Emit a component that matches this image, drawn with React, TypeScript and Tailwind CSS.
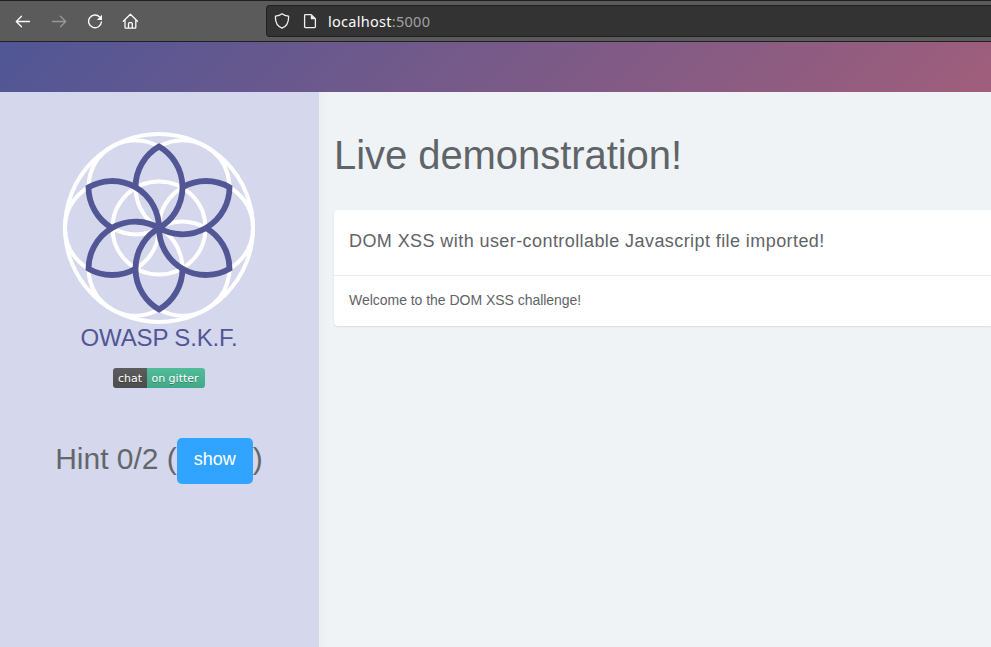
const SPOKES = [0, 60, 120, 180, 240, 300];

function Toolbar() {
  return (
    <header className="flex h-[42px] items-center border-y border-[#202022] bg-[#5b5b5b]">
      <svg className="ml-[15px] size-4 shrink-0" viewBox="0 0 16 16" fill="none" stroke="#fbfbfb" strokeWidth="1.3" strokeLinecap="round" strokeLinejoin="round">
        <path d="M14.500 8.500H1.500M6.500 3.200 1.300 8.500l5.200 5.300" />
      </svg>
      <svg className="ml-5 size-4 shrink-0" viewBox="0 0 16 16" fill="none" stroke="#989898" strokeWidth="1.3" strokeLinecap="round" strokeLinejoin="round">
        <path d="M1.500 8.500h13M9.500 3.200l5.200 5.300-5.200 5.300" />
      </svg>
      <svg className="ml-5 size-4 shrink-0" viewBox="0 0 16 16" fill="none" stroke="#fbfbfb" strokeWidth="1.4" strokeLinecap="round">
        <path d="M12.700 4A6.400 6.400 0 1 0 14.400 9" />
        <path d="M15 1.700v5.200H9.800z" fill="#fbfbfb" stroke="none" />
      </svg>
      <svg className="ml-[19px] size-4 shrink-0" viewBox="0 0 16 16" fill="none" stroke="#fbfbfb" strokeWidth="1.3" strokeLinecap="round" strokeLinejoin="round">
        <path d="M1.300 8.300 8.400 1.300l7.100 7M3 7v7.300q0 .9.9.9h9q.9 0 .9-.9V7M6.500 15v-4.300q0-1 1-1h1.800q1 0 1 1V15" />
      </svg>
      <div className="ml-[128px] flex h-8 flex-1 items-center rounded-l border border-r-0 border-[#202022] bg-[#333333]">
        <svg className="ml-[7px] size-4 shrink-0" viewBox="0 0 16 16" fill="none" stroke="#f0f0f0" strokeWidth="1.3" strokeLinejoin="round">
          <path d="M8 .8c2 1.500 4.300 2.100 6.500 2.300.4 4.900-.9 9.600-6.500 12.100C2.400 12.700 1.100 8 1.500 3.100 3.700 2.900 6 2.300 8 .8z" />
        </svg>
        <svg className="ml-3 size-4 shrink-0" viewBox="0 0 16 16" fill="none" stroke="#f0f0f0" strokeWidth="1.300" strokeLinejoin="round">
          <path d="M3.400 1.600h5.800l4.200 4.200v8q0 .8-.8.8H3.400q-.8 0-.8-.8V2.400q0-.8.8-.8z" />
          <path d="M8.800 1.400v4.900h4.900z" fill="#f0f0f0" stroke="none" />
        </svg>
        <span className="ml-[10px] font-['Noto_Sans',sans-serif] text-[14.5px] leading-5 tracking-[.28px] text-[#fbfbfb]">
          localhost<span className="text-[#a2a2a2]">:5000</span>
        </span>
      </div>
    </header>
  );
}

function Logo() {
  return (
    <svg className="size-48" viewBox="-96 -96 192 192" fill="none">
      <g stroke="#ffffff" strokeWidth="4">
        <circle r="94" />
        <circle r="46.500" />
        {SPOKES.map((a) => (
          <circle key={a} cx="47" r="47" transform={`rotate(${a})`} />
        ))}
      </g>
      <g stroke="#525695" strokeWidth="5.800">
        {SPOKES.map((a) => (
          <path key={a} d="M-23.500-40.700A47 47 0 0 1 0-81.400A47 47 0 0 1 0 0" transform={`rotate(${a})`} />
        ))}
      </g>
    </svg>
  );
}

function Sidebar() {
  return (
    <aside className="flex w-[319px] shrink-0 flex-col items-center bg-[#d5d7ed] pt-10 pr-px">
      <Logo />
      <div className="-mt-px text-2xl leading-[30px] tracking-[-.15px] text-[#525695]">OWASP S.K.F.</div>
      <div className="mt-[15px] flex h-5 overflow-hidden rounded-[3px] font-['DejaVu_Sans',sans-serif] text-[11px] leading-[21px] text-white [text-shadow:0_1px_0_rgba(1,1,1,.3)]">
        <span className="w-[34px] bg-linear-to-b from-[#5c5c5c] to-[#4d4d4d] text-center">chat</span>
        <span className="w-[58px] bg-linear-to-b from-[#50bc9a] to-[#43a888] pr-0.5 text-center">on gitter</span>
      </div>
      <div className="mt-[50px] flex text-[30px] leading-[42px] whitespace-pre text-[#63676b]">
        <span>Hint 0/2 (</span>
        <button className="h-[46px] w-[76px] rounded-[5px] bg-[#30a4ff] pb-1 text-lg text-white">show</button>
        <span>)</span>
      </div>
    </aside>
  );
}

export default function App() {
  return (
    <div className="flex h-[647px] w-[991px] flex-col overflow-hidden bg-[#f0f3f6] font-['Liberation_Sans',Arial,sans-serif] text-[#5f6468]">
      <Toolbar />
      <div className="h-[50px] shrink-0 bg-[linear-gradient(135deg,#505696,#a05e7b)]" />
      <div className="flex flex-1">
        <Sidebar />
        <main className="flex-1 bg-[linear-gradient(to_right,#ebeff2,#f0f3f6_10px)] pl-[15px]">
          <h1 className="mt-[41px] text-[40px] leading-[44px] tracking-[-.06px]">Live demonstration!</h1>
          <section className="mt-[33px] rounded-l bg-white shadow-[0_1px_2px_rgba(0,0,0,.1)]">
            <h2 className="h-[66px] border-b border-[#e9ecef] pt-[17px] pl-[15px] text-lg leading-7 tracking-[.42px]">
              DOM XSS with user-controllable Javascript file imported!
            </h2>
            <p className="h-[50px] pt-[14px] pl-[15px] text-sm leading-5 tracking-[-.03px]">Welcome to the DOM XSS challenge!</p>
          </section>
        </main>
      </div>
    </div>
  );
}
